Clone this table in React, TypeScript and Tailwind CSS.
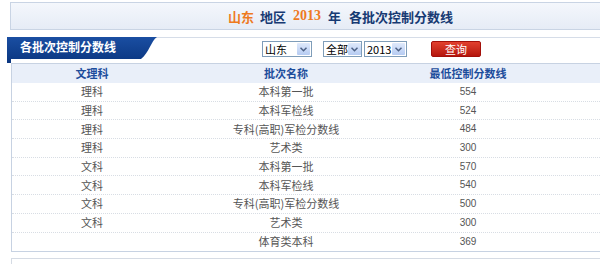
import React from "react";

const rows: [string, string, string][] = [
  ["理科", "本科第一批", "554"],
  ["理科", "本科军检线", "524"],
  ["理科", "专科(高职)军检分数线", "484"],
  ["理科", "艺术类", "300"],
  ["文科", "本科第一批", "570"],
  ["文科", "本科军检线", "540"],
  ["文科", "专科(高职)军检分数线", "500"],
  ["文科", "艺术类", "300"],
  ["", "体育类本科", "369"],
];

function Select({ label, w }: { label: string; w: string }) {
  return (
    <div className={`flex items-center h-[16px] border border-[#7f9db9] bg-white ${w}`}>
      <span className="flex-1 pl-[2px] text-[11px] leading-[14px] text-black whitespace-nowrap">{label}</span>
      <span className="flex items-center justify-center w-[13px] h-[12px] mr-[1px] bg-gradient-to-b from-[#dfe9fb] to-[#b6cbf2] rounded-[1px] shrink-0">
        <svg width="7" height="5" viewBox="0 0 7 5">
          <path d="M0.5 0.8 L3.5 3.8 L6.5 0.8" fill="none" stroke="#4d6185" strokeWidth="1.5" />
        </svg>
      </span>
    </div>
  );
}

export default function App() {
  return (
    <div className="w-[600px] h-[264px] bg-white overflow-hidden font-['Noto_Sans_CJK_SC','Noto_Sans',sans-serif]">
      <div className="pt-[2px] pl-[10px]">
        <div className="h-[28px] border border-r-0 border-[#c9d4e4] bg-gradient-to-b from-[#f4f7fc] to-[#e6ecf6] flex items-center pl-[217px] gap-[6px] text-[13px] font-bold leading-none">
          <span className="text-[#ee7a1f]">山东</span>
          <span className="text-[#173a73]">地区</span>
          <span className="text-[#ee7a1f] font-['Liberation_Serif',serif] text-[14px] ml-[1px]">2013</span>
          <span className="text-[#173a73] ml-[1px]">年</span>
          <span className="text-[#173a73] ml-[2px]">各批次控制分数线</span>
        </div>
      </div>

      <div className="mt-[7px] ml-[7px] flex items-start border-t border-[#d6dde8] relative">
        <div className="relative w-[150px] h-[22px] -mt-px">
          <svg className="absolute inset-0" width="150" height="26" viewBox="0 0 150 26">
            <defs>
              <linearGradient id="tabg" x1="0" y1="0" x2="0" y2="1">
                <stop offset="0" stopColor="#1a4ea2" />
                <stop offset="1" stopColor="#0a3680" />
              </linearGradient>
            </defs>
            <path d="M0 0 H150 C144 4 142 16 134 22 H4 V26 H0 Z" fill="url(#tabg)" />
          </svg>
          <span className="relative block pl-[13px] pt-[4px] text-[12px] font-bold leading-none text-white">各批次控制分数线</span>
        </div>
        <div className="flex items-center pt-[3px]">
          <div className="ml-[105px]"><Select label="山东" w="w-[50px]" /></div>
          <div className="ml-[11px]"><Select label="全部" w="w-[39px]" /></div>
          <div className="ml-[2px]"><Select label="2013" w="w-[43px]" /></div>
          <button className="ml-[24px] w-[50px] h-[16px] rounded-[2px] bg-gradient-to-b from-[#e2402e] to-[#b5140c] text-white text-[11px] leading-none border border-[#a3100a]">查询</button>
        </div>
      </div>

      <div className="ml-[11px] mt-[4px] border border-r-0 border-[#c7d2e2] text-[11px] leading-none">
        <div className="grid grid-cols-[160px_228px_136px_1fr] h-[19px] items-center bg-[#e9eff9] font-bold text-[#1d4d9c]">
          <div className="text-center">文理科</div>
          <div className="text-center">批次名称</div>
          <div className="text-center">最低控制分数线</div>
          <div />
        </div>
        {rows.map((r, i) => (
          <div
            key={i}
            className={`grid grid-cols-[160px_228px_136px_1fr] h-[18.7px] items-center text-[#555] ${i < rows.length - 1 ? "border-b border-dotted border-[#d8dde4]" : ""}`}
          >
            <div className="text-center">{r[0]}</div>
            <div className="text-center">{r[1]}</div>
            <div className="text-center font-['Liberation_Sans',sans-serif] text-[10px]">{r[2]}</div>
            <div />
          </div>
        ))}
      </div>

      <div className="ml-[11px] mt-[6px] h-[20px] border border-r-0 border-[#d5dbe4]" />
    </div>
  );
}
